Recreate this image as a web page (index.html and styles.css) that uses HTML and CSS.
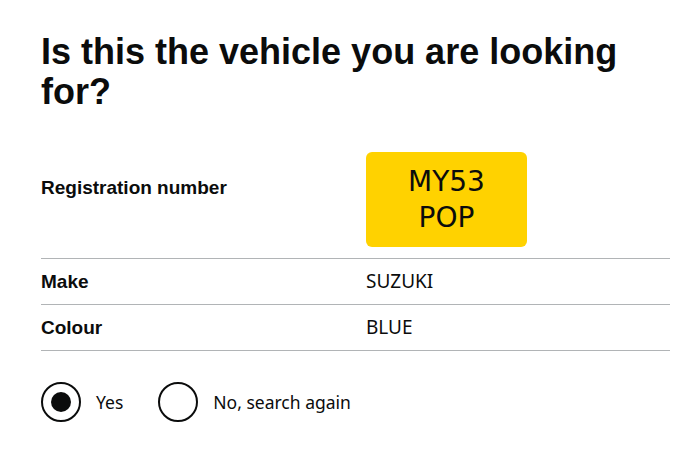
FILE: index.html
```html
<!DOCTYPE html>
<html lang="en">
<head>
<meta charset="utf-8">
<title>Vehicle check</title>
<link rel="stylesheet" href="styles.css">
</head>
<body>
<main class="page">
  <h1 class="title">Is this the vehicle you are looking for?</h1>
  <dl class="summary">
    <div class="row row-plate">
      <dt class="key">Registration number</dt>
      <dd class="value"><div class="plate">MY53<br>POP</div></dd>
    </div>
    <div class="row">
      <dt class="key">Make</dt>
      <dd class="value">SUZUKI</dd>
    </div>
    <div class="row">
      <dt class="key">Colour</dt>
      <dd class="value">BLUE</dd>
    </div>
  </dl>
  <div class="radios">
    <label class="radio">
      <span class="circle checked"></span>
      <span class="radio-label">Yes</span>
    </label>
    <label class="radio">
      <span class="circle"></span>
      <span class="radio-label">No, search again</span>
    </label>
  </div>
</main>
</body>
</html>
```
FILE: styles.css
```css
html, body {
  margin: 0;
  padding: 0;
  background: #ffffff;
}
body {
  font-family: "Noto Sans", "Liberation Sans", sans-serif;
  color: #0b0c0c;
}
.page {
  padding: 32px 3px 0 41px;
}
.title {
  font-family: "Liberation Sans", Arial, sans-serif;
  font-weight: 700;
  font-size: 36px;
  line-height: 40px;
  margin: 0 0 28px 0;
  width: 610px;
}
.summary {
  margin: 0;
}
.row {
  display: grid;
  grid-template-columns: 325px 1fr;
  border-bottom: 1px solid #b1b4b6;
  height: 45px;
  align-items: center;
}
.row-plate {
  height: 118px;
  align-items: start;
}
.key {
  margin: 0;
  font-family: "Liberation Sans", Arial, sans-serif;
  font-weight: 700;
  font-size: 19px;
  line-height: 25px;
}
.row-plate .key {
  padding-top: 35px;
}
.value {
  margin: 0;
  font-size: 19px;
  line-height: 25px;
}
.row-plate .value {
  padding-top: 12px;
}
.plate {
  width: 161px;
  height: 95px;
  background: #ffd200;
  border-radius: 6px;
  display: flex;
  align-items: center;
  justify-content: center;
  text-align: center;
  font-family: "DejaVu Sans", sans-serif;
  font-size: 28px;
  line-height: 36px;
}
.radios {
  display: flex;
  gap: 35px;
  margin-top: 31px;
}
.radio {
  display: flex;
  align-items: center;
  gap: 15px;
  font-size: 17.5px;
}
.circle {
  box-sizing: border-box;
  width: 40px;
  height: 40px;
  border: 2px solid #0b0c0c;
  border-radius: 50%;
  display: flex;
  align-items: center;
  justify-content: center;
}
.circle.checked::after {
  content: "";
  width: 20px;
  height: 20px;
  border-radius: 50%;
  background: #0b0c0c;
}
```
